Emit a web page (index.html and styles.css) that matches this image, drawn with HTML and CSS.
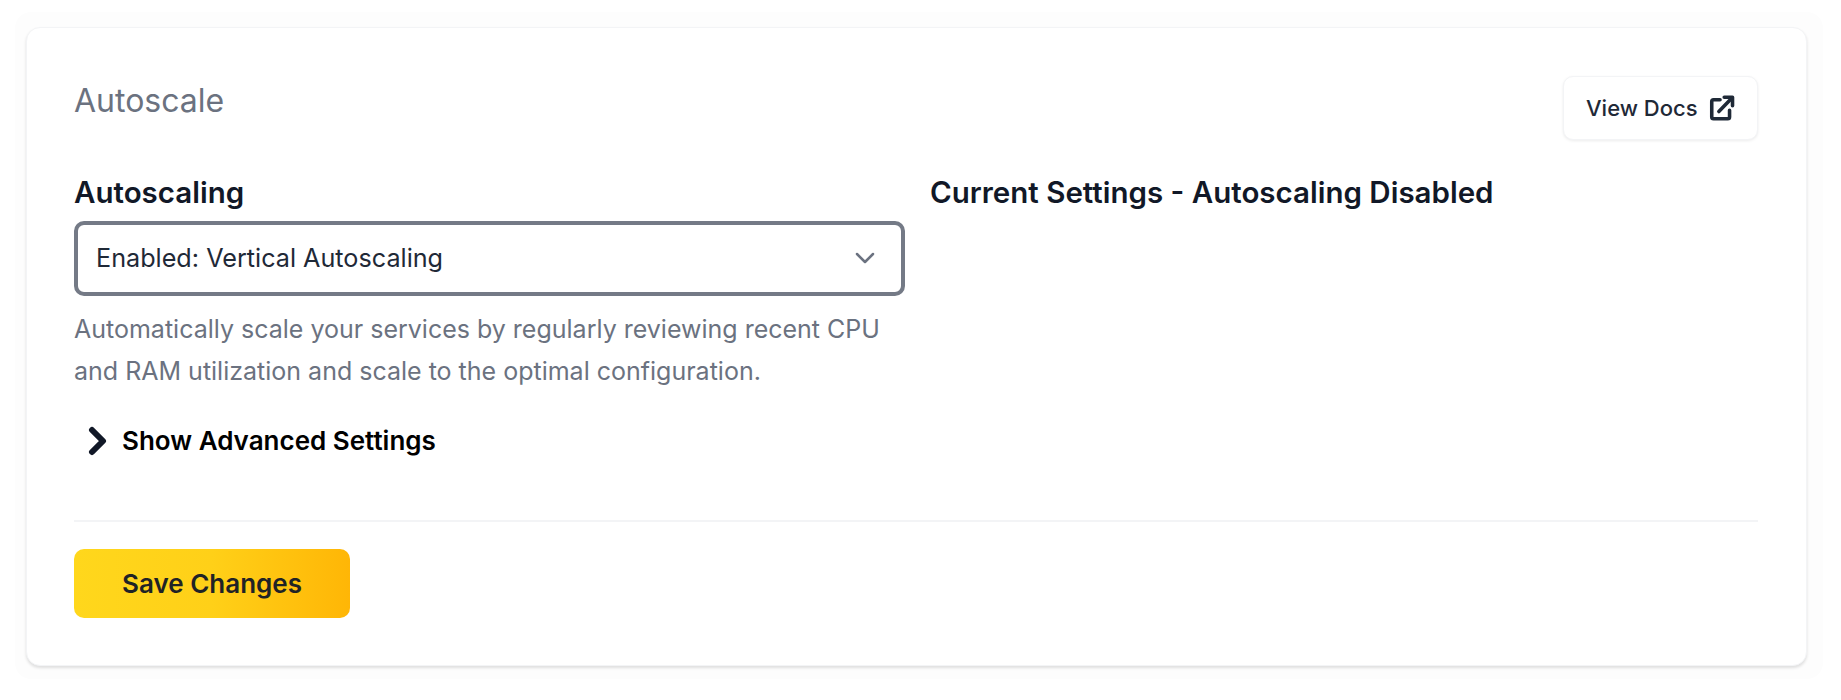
FILE: index.html
```html
<!DOCTYPE html>
<html lang="en">
<head>
    <meta charset="UTF-8">
    <meta name="viewport" content="width=device-width, initial-scale=1.0">
    <title>Autoscale</title>
    <link rel="stylesheet" href="styles.css">
</head>
<body>

<div class="outer">
    <div class="card">
        <div class="card-header">
            <h2 class="card-title">Autoscale</h2>
            <button class="docs-btn">
                View Docs
                <svg class="docs-icon" viewBox="0 0 24 24" fill="none" stroke="currentColor" stroke-width="3" stroke-linecap="round" stroke-linejoin="round">
                    <path d="M11 5H5.500A1.500 1.500 0 0 0 4 6.500V19.500A1.500 1.500 0 0 0 5.500 21H17.500A1.500 1.500 0 0 0 19 19.500V14"/>
                    <path d="M10 15L21 3.500"/>
                    <path d="M14.500 3H21.500V10"/>
                </svg>
            </button>
        </div>

        <div class="columns">
            <div class="column">
                <label class="field-label">Autoscaling</label>
                <div class="select-box">
                    <span>Enabled: Vertical Autoscaling</span>
                    <svg class="select-arrow" viewBox="0 0 20 12" fill="none" stroke="currentColor" stroke-width="2.500" stroke-linecap="round" stroke-linejoin="round">
                        <path d="M2 2L10 10L18 2"/>
                    </svg>
                </div>
                <p class="help-text">Automatically scale your services by regularly reviewing recent CPU and RAM utilization and scale to the optimal configuration.</p>
                <div class="advanced-toggle">
                    <svg class="toggle-icon" viewBox="0 0 20 30" fill="none" stroke="currentColor" stroke-width="6" stroke-linecap="round" stroke-linejoin="round">
                        <path d="M4 4L15 15L4 26"/>
                    </svg>
                    Show Advanced Settings
                </div>
            </div>
            <div class="column">
                <h3 class="current-title">Current Settings - Autoscaling Disabled</h3>
            </div>
        </div>

        <div class="card-footer">
            <button class="save-btn">Save Changes</button>
        </div>
    </div>
</div>

</body>
</html>
```

FILE: styles.css
```css
* {
    box-sizing: border-box;
}
body {
    font-family: Inter, "Liberation Sans", sans-serif;
    margin: 0;
    padding: 0;
    background-color: #fff;
    color: #1a202c;
}
.outer {
    margin: 12px 18px 0 15px;
    height: 667px;
    padding: 15px 16px 13px 11px;
    background-color: #fdfdfd;
    border-radius: 16px;
}
.card {
    height: 639px;
    padding: 48px 48px 0 47px;
    background-color: #fff;
    border-radius: 14px;
    border: 1px solid #f3f4f6;
    box-shadow: 0 2px 3px rgba(0, 0, 0, 0.12);
}
.card-header {
    display: flex;
    justify-content: space-between;
    align-items: flex-start;
    height: 99px;
}
.card-title {
    margin: 5px 0 0;
    font-size: 32px;
    line-height: 40px;
    font-weight: 400;
    color: #6b7280;
}
.docs-btn {
    display: flex;
    align-items: center;
    gap: 9px;
    width: 195px;
    height: 64px;
    padding: 0 22px;
    background-color: #fff;
    border: 1px solid #f3f4f6;
    border-radius: 10px;
    box-shadow: 0 1px 3px rgba(0, 0, 0, 0.08);
    font-family: inherit;
    font-size: 22px;
    font-weight: 500;
    white-space: nowrap;
    color: #1f2937;
}
.docs-icon {
    width: 30px;
    height: 30px;
}
.columns {
    display: grid;
    grid-template-columns: 831px 1fr;
    column-gap: 25px;
    height: 347px;
    border-bottom: 2px solid #f3f4f6;
}
.field-label {
    display: block;
    font-size: 29.500px;
    line-height: 34px;
    font-weight: 600;
    color: #111827;
}
.select-box {
    display: flex;
    justify-content: space-between;
    align-items: center;
    height: 75px;
    margin-top: 12px;
    padding: 0 26px 2px 18px;
    border: 4px solid #747a86;
    border-radius: 10px;
    font-size: 25.200px;
    color: #1f2937;
}
.select-arrow {
    width: 20px;
    height: 12px;
    color: #6b7280;
}
.help-text {
    margin: 12px 0 0;
    font-size: 25px;
    line-height: 42px;
    color: #6b7280;
}
.advanced-toggle {
    display: flex;
    align-items: center;
    gap: 14px;
    margin-top: 31px;
    padding-left: 14px;
    font-size: 26px;
    line-height: 36px;
    font-weight: 600;
    color: #000;
}
.toggle-icon {
    width: 20px;
    height: 30px;
    color: #111827;
}
.current-title {
    margin: 0;
    font-size: 29.500px;
    line-height: 34px;
    font-weight: 600;
    color: #111827;
}
.card-footer {
    padding-top: 27px;
}
.save-btn {
    display: block;
    width: 276px;
    height: 69px;
    padding: 0;
    border: none;
    border-radius: 10px;
    background: linear-gradient(90deg, #ffd71c 0%, #ffd018 50%, #ffb606 100%);
    font-family: inherit;
    font-size: 26px;
    font-weight: 600;
    color: #1f2326;
}
```
